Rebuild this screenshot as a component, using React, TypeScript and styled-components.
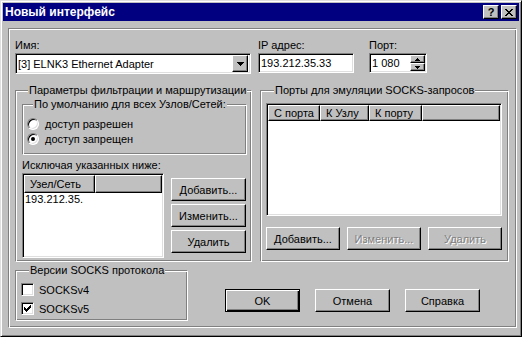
import React from 'react';
import styled, { createGlobalStyle, css } from 'styled-components';

const GlobalStyle = createGlobalStyle`
  html, body {
    margin: 0;
    padding: 0;
    background: #c0c0c0;
  }
  body {
    font-family: "Liberation Sans", Arial, sans-serif;
    font-size: 11px;
    color: #000;
  }
  * {
    box-sizing: border-box;
  }
`;

const raised = css`
  border: 1px solid;
  border-color: #fff #000 #000 #fff;
  box-shadow: inset -1px -1px #808080;
`;

const sunken = css`
  border: 1px solid;
  border-color: #808080 #fff #fff #808080;
  box-shadow: inset 1px 1px #000, inset -1px -1px #dfdfdf;
`;

const etched = css`
  border: 1px solid;
  border-color: #808080 #fff #fff #808080;
  box-shadow: inset 1px 1px #fff, inset -1px -1px #808080;
`;

// pixel glyphs
const CLOSE = ['##....##', '.##..##.', '..####..', '...##...', '..####..', '.##..##.', '##....##'];
const DOWN = ['#######', '.#####.', '..###..', '...#...'];
const SPIN_UP = ['..#..', '.###.', '#####'];
const SPIN_DOWN = ['#####', '.###.', '..#..'];
const CHECK = ['......#', '.....##', '#...###', '##.###.', '#####..', '.###...', '..#....'];

const Pix = styled.svg`
  display: block;
  flex: none;
`;

const PixelIcon = ({ rows, color = '#000' }: { rows: string[]; color?: string }) => {
  const w = rows[0].length;
  const h = rows.length;
  return (
    <Pix width={w} height={h} viewBox={`0 0 ${w} ${h}`} shapeRendering="crispEdges">
      {rows.flatMap((r, y) =>
        r.split('').map((c, x) =>
          c === '#' ? <rect key={`${x}-${y}`} x={x} y={y} width={1} height={1} fill={color} /> : null
        )
      )}
    </Pix>
  );
};

const Window = styled.div`
  width: 522px;
  height: 337px;
  display: flex;
  flex-direction: column;
  background: #c0c0c0;
  border: 1px solid;
  border-color: #dfdfdf #000 #000 #dfdfdf;
  box-shadow: inset 1px 1px #fff, inset -1px -1px #808080;
  padding: 2px;
`;

const TitleBar = styled.div`
  height: 18px;
  flex: none;
  display: flex;
  align-items: center;
  padding: 0 2px 0 2px;
  background: #000080;
  color: #fff;
`;

const Title = styled.div`
  flex: 1;
  font-weight: bold;
  font-size: 12px;
  line-height: 14px;
`;

const CaptionButton = styled.div`
  width: 16px;
  height: 14px;
  margin-left: 2px;
  background: #c0c0c0;
  color: #000;
  display: flex;
  align-items: center;
  justify-content: center;
  font-weight: bold;
  font-size: 11px;
  ${raised};
`;

const Body = styled.div`
  flex: 1;
  display: flex;
  padding: 7px 3px 6px 5px;
`;

const Panel = styled.div`
  flex: 1;
  display: flex;
  flex-direction: column;
  padding: 10px 7px 6px 6px;
  ${etched};
`;

const FieldsRow = styled.div`
  display: flex;
  align-items: flex-start;
`;

const Field = styled.div<{ $w: number; $ml?: number }>`
  width: ${p => p.$w}px;
  margin-left: ${p => p.$ml ?? 0}px;
  display: flex;
  flex-direction: column;
`;

const Label = styled.div<{ $mt?: number }>`
  line-height: 13px;
  height: 13px;
  margin-top: ${p => p.$mt ?? 0}px;
  margin-bottom: 1px;
  white-space: nowrap;
`;

const TextBox = styled.div<{ $h?: number }>`
  height: ${p => p.$h ?? 20}px;
  background: #fff;
  display: flex;
  align-items: center;
  padding: 2px;
  white-space: nowrap;
  ${sunken};
`;

const BoxText = styled.span`
  flex: 1;
`;

const DropButton = styled.div`
  width: 16px;
  height: 17px;
  background: #c0c0c0;
  display: flex;
  align-items: center;
  justify-content: center;
  ${raised};
`;

const Spinner = styled.div`
  width: 15px;
  align-self: stretch;
  display: flex;
  flex-direction: column;
  margin: -1px -1px -1px 0;
`;

const SpinButton = styled.div`
  flex: 1;
  background: #c0c0c0;
  display: flex;
  align-items: center;
  justify-content: center;
  ${raised};
`;

const MiddleRow = styled.div`
  display: flex;
  align-items: stretch;
  gap: 8px;
  margin-top: 10px;
`;

const Group = styled.fieldset<{ $w?: number; $pad: string }>`
  margin: 0;
  min-width: 0;
  ${p => (p.$w ? `width: ${p.$w}px; flex: none;` : 'flex: 1;')}
  padding: ${p => p.$pad};
  display: flex;
  flex-direction: column;
  ${etched};
`;

const Legend = styled.legend<{ $ml?: number }>`
  padding: 0 1px;
  margin-left: ${p => p.$ml ?? 6}px;
  line-height: 13px;
  background: #c0c0c0;
  white-space: nowrap;
`;

const OptionRow = styled.div<{ $h: number }>`
  height: ${p => p.$h}px;
  display: flex;
  align-items: center;
  white-space: nowrap;
`;

const Radio = styled.span<{ $on?: boolean }>`
  width: 12px;
  height: 12px;
  flex: none;
  margin-right: 6px;
  border-radius: 50%;
  background: #fff;
  position: relative;
  border: 1px solid;
  border-color: #808080 #fff #fff #808080;
  box-shadow: inset 1px 1px #000, inset -1px -1px #dfdfdf;
  &::after {
    content: '';
    display: ${p => (p.$on ? 'block' : 'none')};
    position: absolute;
    left: 3px;
    top: 3px;
    width: 4px;
    height: 4px;
    border-radius: 50%;
    background: #000;
  }
`;

const Check = styled.span`
  width: 13px;
  height: 13px;
  flex: none;
  margin-right: 5px;
  background: #fff;
  display: flex;
  align-items: center;
  justify-content: center;
  ${sunken};
`;

const ListArea = styled.div`
  display: flex;
  align-items: flex-start;
`;

const ListView = styled.div<{ $w: number; $h: number }>`
  width: ${p => p.$w}px;
  height: ${p => p.$h}px;
  flex: none;
  background: #fff;
  padding: 1px;
  display: flex;
  flex-direction: column;
  ${sunken};
`;

const HeaderRow = styled.div<{ $h: number }>`
  height: ${p => p.$h}px;
  flex: none;
  display: flex;
  background: #c0c0c0;
`;

const HeaderCell = styled.div<{ $w?: number }>`
  ${p => (p.$w ? `width: ${p.$w}px; flex: none;` : 'flex: 1;')}
  display: flex;
  align-items: center;
  padding-left: 5px;
  white-space: nowrap;
  ${raised};
`;

const Item = styled.div`
  line-height: 13px;
  padding-left: 1px;
`;

const SideButtons = styled.div`
  margin-left: 7px;
  margin-top: 5px;
  display: flex;
  flex-direction: column;
  gap: 3px;
`;

const ButtonRow = styled.div<{ $mt: number }>`
  display: flex;
  justify-content: space-between;
  margin-top: ${p => p.$mt}px;
`;

const Button = styled.div<{ $w?: number; $disabled?: boolean; $default?: boolean }>`
  width: ${p => p.$w ?? 75}px;
  height: 23px;
  flex: none;
  display: flex;
  align-items: center;
  justify-content: center;
  white-space: nowrap;
  background: #c0c0c0;
  color: ${p => (p.$disabled ? '#808080' : '#000')};
  text-shadow: ${p => (p.$disabled ? '1px 1px #fff' : 'none')};
  ${p =>
    p.$default
      ? css`
          border: 1px solid #000;
          box-shadow: inset 1px 1px #fff, inset -1px -1px #000, inset -2px -2px #808080;
        `
      : raised};
`;

const BottomRow = styled.div`
  display: flex;
  align-items: flex-start;
  margin-top: 2px;
`;

const DialogButtons = styled.div`
  display: flex;
  gap: 15px;
  margin-left: 37px;
  padding-top: 25px;
`;

export default function App() {
  return (
    <>
      <GlobalStyle />
      <Window>
        <TitleBar>
          <Title>Новый интерфейс</Title>
          <CaptionButton>?</CaptionButton>
          <CaptionButton>
            <PixelIcon rows={CLOSE} />
          </CaptionButton>
        </TitleBar>
        <Body>
          <Panel>
            <FieldsRow>
              <Field $w={236}>
                <Label>Имя:</Label>
                <TextBox $h={21}>
                  <BoxText>[3] ELNK3 Ethernet Adapter</BoxText>
                  <DropButton>
                    <PixelIcon rows={DOWN} />
                  </DropButton>
                </TextBox>
              </Field>
              <Field $w={96} $ml={7}>
                <Label>IP адрес:</Label>
                <TextBox>
                  <BoxText>193.212.35.33</BoxText>
                </TextBox>
              </Field>
              <Field $w={58} $ml={15}>
                <Label>Порт:</Label>
                <TextBox>
                  <BoxText>1 080</BoxText>
                  <Spinner>
                    <SpinButton>
                      <PixelIcon rows={SPIN_UP} />
                    </SpinButton>
                    <SpinButton>
                      <PixelIcon rows={SPIN_DOWN} />
                    </SpinButton>
                  </Spinner>
                </TextBox>
              </Field>
            </FieldsRow>

            <MiddleRow>
              <Group $w={237} $pad="1px 4px 3px 6px">
                <Legend>Параметры фильтрации и маршрутизации</Legend>
                <Group $pad="5px 4px 8px 4px">
                  <Legend>По умолчанию для всех Узлов/Сетей:</Legend>
                  <OptionRow $h={15}>
                    <Radio />
                    доступ разрешен
                  </OptionRow>
                  <OptionRow $h={15}>
                    <Radio $on />
                    доступ запрещен
                  </OptionRow>
                </Group>
                <Label $mt={4}>Исключая указанных ниже:</Label>
                <ListArea>
                  <ListView $w={142} $h={85}>
                    <HeaderRow $h={18}>
                      <HeaderCell $w={71}>Узел/Сеть</HeaderCell>
                      <HeaderCell />
                    </HeaderRow>
                    <Item>193.212.35.</Item>
                  </ListView>
                  <SideButtons>
                    <Button>Добавить...</Button>
                    <Button>Изменить...</Button>
                    <Button>Удалить</Button>
                  </SideButtons>
                </ListArea>
              </Group>

              <Group $pad="6px 6px 10px 5px">
                <Legend $ml={8}>Порты для эмуляции SOCKS-запросов</Legend>
                <ListView $w={236} $h={113}>
                  <HeaderRow $h={16}>
                    <HeaderCell $w={52}>С порта</HeaderCell>
                    <HeaderCell $w={49}>К Узлу</HeaderCell>
                    <HeaderCell $w={53}>К порту</HeaderCell>
                    <HeaderCell />
                  </HeaderRow>
                </ListView>
                <ButtonRow $mt={11}>
                  <Button $w={74}>Добавить...</Button>
                  <Button $w={74} $disabled>
                    Изменить...
                  </Button>
                  <Button $w={74} $disabled>
                    Удалить
                  </Button>
                </ButtonRow>
              </Group>
            </MiddleRow>

            <BottomRow>
              <Group $w={173} $pad="3px 4px 2px 5px">
                <Legend $ml={8}>Версии SOCKS протокола</Legend>
                <OptionRow $h={19}>
                  <Check />
                  SOCKSv4
                </OptionRow>
                <OptionRow $h={19}>
                  <Check>
                    <PixelIcon rows={CHECK} />
                  </Check>
                  SOCKSv5
                </OptionRow>
              </Group>
              <DialogButtons>
                <Button $default>OK</Button>
                <Button>Отмена</Button>
                <Button>Справка</Button>
              </DialogButtons>
            </BottomRow>
          </Panel>
        </Body>
      </Window>
    </>
  );
}
